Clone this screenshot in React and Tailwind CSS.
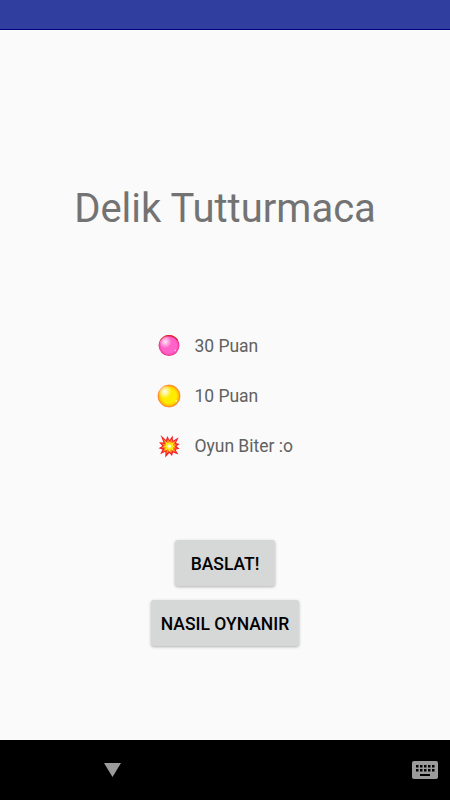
function PinkBall() {
  return (
    <svg width="24" height="24" viewBox="0 0 24 24">
      <defs>
        <radialGradient id="pinkBody" cx="0.5" cy="0.5" r="0.5">
          <stop offset="0.72" stopColor="#ff62c8" />
          <stop offset="0.9" stopColor="#f848b0" />
          <stop offset="1" stopColor="#d8156f" />
        </radialGradient>
        <radialGradient id="pinkShine">
          <stop offset="0" stopColor="#fff" stopOpacity="0.85" />
          <stop offset="1" stopColor="#fff" stopOpacity="0" />
        </radialGradient>
      </defs>
      <circle cx="12" cy="11.6" r="10.4" fill="url(#pinkBody)" />
      <path d="M3.2 6.8A10 10 0 0 1 20.8 6.8" fill="none" stroke="#e0202c" strokeWidth="1.2" />
      <circle cx="8.3" cy="7.8" r="6.5" fill="url(#pinkShine)" />
      <circle cx="18.3" cy="16.4" r="0.8" fill="#ffc4ea" />
    </svg>
  );
}

function YellowBall() {
  return (
    <svg width="24" height="24" viewBox="0 0 24 24">
      <defs>
        <radialGradient id="yellowBody" cx="0.5" cy="0.5" r="0.5">
          <stop offset="0.65" stopColor="#ffeb00" />
          <stop offset="0.85" stopColor="#ffc800" />
          <stop offset="1" stopColor="#ff8a1c" />
        </radialGradient>
        <radialGradient id="yellowShine">
          <stop offset="0" stopColor="#fff" stopOpacity="0.95" />
          <stop offset="1" stopColor="#fff" stopOpacity="0" />
        </radialGradient>
      </defs>
      <circle cx="12" cy="12" r="11" fill="url(#yellowBody)" stroke="#ff8424" strokeWidth="0.8" />
      <circle cx="7.8" cy="7.5" r="7" fill="url(#yellowShine)" />
      <circle cx="19" cy="17" r="1" fill="#fff3a0" />
    </svg>
  );
}

function Explosion() {
  return (
    <svg width="24" height="24" viewBox="0 0 24 24">
      <path
        d="M3.5 1L9 6L10.3 2L12.5 6L15.7 1.5L16 6.7L21.7 3.3L19 9L22.7 10L19.5 12.3L22.6 14.7L18.5 15.7L21.5 20.5L16 18.5L15 22L12.3 19L8.3 23.5L8.4 17.8L3.2 20.3L5.5 15.5L1.5 14.3L5.3 12L2 8.3L6.5 8.5Z"
        fill="#f3222b"
      />
      <path
        d="M6 4.5L9.8 8L11 5L12.6 8L15 5L15.4 8.7L19.3 6L17.3 10L20 10.7L17.2 12.5L20 14.4L16.7 14.5L18.8 18L15 16.7L14.2 19.3L12 16.7L9.5 20L9.7 16L5.8 18L7.6 14.5L4.5 13.3L7.4 12L4.5 9.5L8.4 10Z"
        fill="#ff9418"
      />
      <path
        d="M8.5 7.5L11 9.5L12.5 7.5L14 9.5L17 8L15.8 11.2L18 12.6L15.6 13.4L16.7 16.4L14 15L12.3 18L11 15.1L7.7 16.4L9.2 13.6L6.5 12.7L9.2 11.3Z"
        fill="#ffea18"
      />
      <circle cx="12.3" cy="12.3" r="1.7" fill="#fffbd0" />
    </svg>
  );
}

function KeyboardIcon() {
  return (
    <svg width="26" height="18" viewBox="0 0 26 18">
      <rect width="26" height="18" rx="2" fill="#9b9b9b" />
      {[4, 8, 12, 16, 20].map((x) => (
        <g key={x} fill="#000">
          <rect x={x} y="4" width="2.5" height="2.5" />
          <rect x={x} y="8" width="2.5" height="2.5" />
        </g>
      ))}
      <rect x="8" y="13" width="10" height="2" fill="#000" />
    </svg>
  );
}

const rows = [
  { icon: <PinkBall />, text: "30 Puan" },
  { icon: <YellowBall />, text: "10 Puan" },
  { icon: <Explosion />, text: "Oyun Biter :o" },
];

export default function App() {
  return (
    <div className="flex h-[800px] w-[450px] flex-col bg-[#fafafa] font-['Roboto',sans-serif]">
      <div className="h-[30px] shrink-0 border-b border-[#000080] bg-[#303f9f]" />

      <main className="flex flex-1 flex-col items-center">
        <h1 className="mt-[155px] text-[40px] leading-[48px] font-normal whitespace-nowrap text-[#737373]">
          Delik Tutturmaca
        </h1>

        <ul className="mt-[88px] w-[136px]">
          {rows.map((row) => (
            <li key={row.text} className="flex h-[50px] items-center gap-[13.5px]">
              <span className="shrink-0">{row.icon}</span>
              <span className="text-[17.5px] leading-6 tracking-[-0.02px] whitespace-nowrap text-[#616161]">
                {row.text}
              </span>
            </li>
          ))}
        </ul>

        <div className="mt-[69px] flex flex-col items-center gap-[14px] text-[17.5px] font-medium text-black">
          <button className="h-[46px] w-[100px] rounded-[3px] bg-[#d6d7d7] pt-[2px] whitespace-nowrap shadow-[0_1px_3px_rgba(0,0,0,0.3)]">
            BASLAT!
          </button>
          <button className="h-[46px] w-[148px] rounded-[3px] bg-[#d6d7d7] pt-[2px] whitespace-nowrap shadow-[0_1px_3px_rgba(0,0,0,0.3)]">
            NASIL OYNANIR
          </button>
        </div>
      </main>

      <nav className="flex h-[60px] shrink-0 items-center justify-between bg-black pr-3 pl-[104px]">
        <svg width="17" height="14" viewBox="0 0 17 14">
          <path d="M0 0H17L8.5 14Z" fill="#9b9b9b" />
        </svg>
        <KeyboardIcon />
      </nav>
    </div>
  );
}
